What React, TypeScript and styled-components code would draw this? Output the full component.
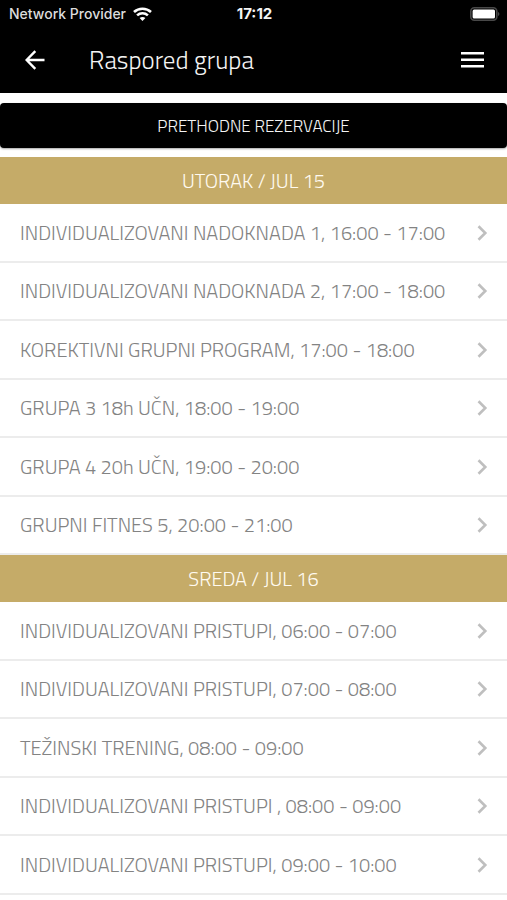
import React from "react";
import styled, { createGlobalStyle } from "styled-components";

const GlobalStyle = createGlobalStyle`
  *, *::before, *::after { box-sizing: border-box; }
  body {
    margin: 0;
    background: #fff;
    font-family: "Titillium Web", Roboto, "Noto Sans", sans-serif;
  }
`;

const Screen = styled.div`
  min-height: 100vh;
  overflow-x: hidden;
  background: #fff;
`;

const TopArea = styled.header`
  background: #000;
  color: #f4f4f4;
`;

const StatusBar = styled.div`
  display: grid;
  grid-template-columns: 1fr auto 1fr;
  align-items: center;
  height: 27px;
  padding: 0 7px 0 9px;
  font-family: Inter, sans-serif;
  font-size: 14px;
  line-height: 20px;
`;

const Carrier = styled.div`
  display: flex;
  align-items: center;
  gap: 7px;
  font-weight: 500;
  color: #dcdcdc;
  white-space: nowrap;
`;

const Clock = styled.time`
  font-size: 15px;
  font-weight: 700;
`;

const BatteryIcon = styled.svg`
  justify-self: end;
`;

const NavBar = styled.div`
  display: flex;
  align-items: center;
  height: 66px;
  padding: 0 16px;
`;

const IconButton = styled.button`
  display: flex;
  align-items: center;
  justify-content: center;
  width: 38px;
  height: 44px;
  padding: 0;
  border: 0;
  background: none;
  color: #fff;
  cursor: pointer;
`;

const Title = styled.h1`
  flex: 1;
  margin: 0 0 0 35px;
  font-size: 25px;
  line-height: 32px;
  font-weight: 300;
`;

const PreviousButton = styled.button`
  display: block;
  width: 100%;
  height: 45px;
  margin: 10px 0 9px;
  border: 0;
  border-radius: 4px;
  background: #000;
  color: #f4f4f4;
  box-shadow: 0 1px 2px rgba(0, 0, 0, 0.35);
  font-family: inherit;
  font-size: 17px;
  line-height: 24px;
  font-weight: 300;
  text-transform: uppercase;
  cursor: pointer;
`;

const DayHeading = styled.h2`
  display: flex;
  align-items: center;
  justify-content: center;
  height: 47px;
  margin: 0;
  background: #c5ab68;
  color: #fffaf0;
  font-size: 20px;
  line-height: 28px;
  font-weight: 300;
`;

const SessionList = styled.ul`
  display: grid;
  grid-auto-rows: 59px 58px;
  margin: 0;
  padding: 0;
  list-style: none;
`;

const SessionItem = styled.li`
  border-bottom: 2px solid #ececec;
`;

const SessionLink = styled.a`
  display: flex;
  align-items: center;
  justify-content: space-between;
  height: 100%;
  padding: 0 18px 0 20px;
  color: #838383;
  font-size: 20px;
  line-height: 28px;
  font-weight: 300;
  text-decoration: none;
  white-space: nowrap;
`;

const days = [
  {
    title: "UTORAK / JUL 15",
    sessions: [
      "INDIVIDUALIZOVANI NADOKNADA 1, 16:00 - 17:00",
      "INDIVIDUALIZOVANI NADOKNADA 2, 17:00 - 18:00",
      "KOREKTIVNI GRUPNI PROGRAM, 17:00 - 18:00",
      "GRUPA 3 18h UČN, 18:00 - 19:00",
      "GRUPA 4 20h UČN, 19:00 - 20:00",
      "GRUPNI FITNES 5, 20:00 - 21:00",
    ],
  },
  {
    title: "SREDA / JUL 16",
    sessions: [
      "INDIVIDUALIZOVANI PRISTUPI, 06:00 - 07:00",
      "INDIVIDUALIZOVANI PRISTUPI, 07:00 - 08:00",
      "TEŽINSKI TRENING, 08:00 - 09:00",
      "INDIVIDUALIZOVANI PRISTUPI , 08:00 - 09:00",
      "INDIVIDUALIZOVANI PRISTUPI, 09:00 - 10:00",
    ],
  },
];

const Wifi = () => (
  <svg width="19" height="14" viewBox="0 0 19 14" fill="none" stroke="#fff" strokeWidth="2.6" aria-hidden="true">
    <path d="M1 5C5.700.6 13.300.6 18 5" />
    <path d="M4.100 8.400c3-2.800 7.800-2.800 10.800 0" />
    <path d="M6.600 11c1.700-1.500 4.100-1.500 5.800 0L9.500 14z" fill="#fff" stroke="none" />
  </svg>
);

const Battery = () => (
  <BatteryIcon width="31" height="14" viewBox="0 0 31 14" role="img" aria-label="Battery full">
    <rect x="1.8" y=".8" width="26" height="12.4" rx="3.5" fill="none" stroke="#484848" strokeWidth="1.6" />
    <rect x="3.6" y="2.5" width="22.400" height="9" rx="1.500" fill="#fff" />
    <path d="M29 5v4c1.900-.6 1.900-3.400 0-4z" fill="#484848" />
  </BatteryIcon>
);

const BackArrow = () => (
  <svg width="20" height="20" viewBox="0 0 20 20" fill="none" stroke="currentColor" strokeWidth="2.4" aria-hidden="true">
    <path d="M19.500 10H2M10.300 1.200 1.600 10l8.700 8.800" />
  </svg>
);

const Menu = () => (
  <svg width="23" height="16" viewBox="0 0 23 16" fill="currentColor" aria-hidden="true">
    <path d="M0 0h23v2.600H0zM0 6.500h23v2.600H0zM0 12.900h23v2.600H0z" />
  </svg>
);

const Chevron = () => (
  <svg width="12" height="16" viewBox="0 0 12 16" fill="none" stroke="#bfbfbf" strokeWidth="2.600" aria-hidden="true">
    <path d="m1.500 1.300 6.800 6.700-6.800 6.700" />
  </svg>
);

export default function App() {
  return (
    <Screen>
      <GlobalStyle />
      <TopArea>
        <StatusBar>
          <Carrier>
            Network Provider
            <Wifi />
          </Carrier>
          <Clock>17:12</Clock>
          <Battery />
        </StatusBar>
        <NavBar>
          <IconButton type="button" aria-label="Back">
            <BackArrow />
          </IconButton>
          <Title>Raspored grupa</Title>
          <IconButton type="button" aria-label="Menu">
            <Menu />
          </IconButton>
        </NavBar>
      </TopArea>
      <main>
        <PreviousButton type="button">Prethodne rezervacije</PreviousButton>
        {days.map((day) => (
          <section key={day.title}>
            <DayHeading>{day.title}</DayHeading>
            <SessionList>
              {day.sessions.map((session) => (
                <SessionItem key={session}>
                  <SessionLink href="#">
                    {session}
                    <Chevron />
                  </SessionLink>
                </SessionItem>
              ))}
            </SessionList>
          </section>
        ))}
      </main>
    </Screen>
  );
}
